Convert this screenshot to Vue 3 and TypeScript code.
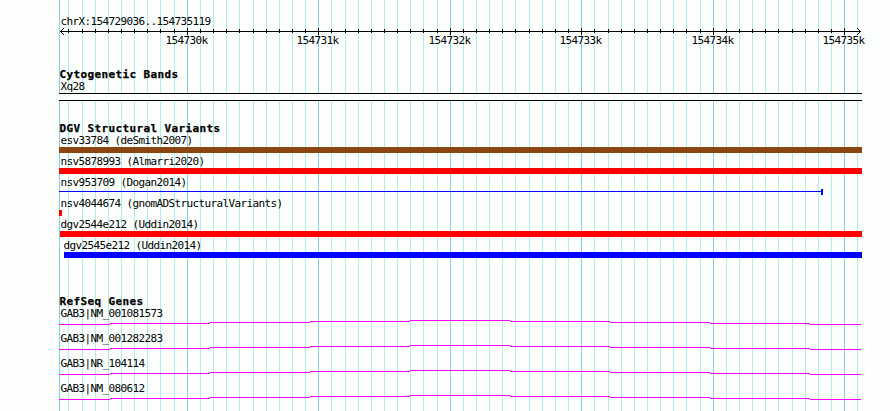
<script setup lang="ts">
interface Variant {
  name: string
  kind: 'bar' | 'range'
  color: string
  start: number
  end: number
  indent: number
}

const regionStart = 154729036
const regionEnd = 154735119
const panelWidth = 803
const scale = 800 / (regionEnd - regionStart + 1)

const toX = (position: number): number => 1 + Math.round((position - regionStart) * scale)

const ticks = Array.from({ length: 61 }, (_, i) => {
  const position = 154729100 + i * 100
  return { position, x: toX(position), major: position % 1000 === 0 }
}).filter((tick) => tick.position < regionEnd)

const majorTicks = ticks.filter((tick) => tick.major)

const variants: Variant[] = [
  { name: 'esv33784 (deSmith2007)', kind: 'bar', color: '#8b4513', start: 0, end: 803, indent: 1 },
  { name: 'nsv5878993 (Almarri2020)', kind: 'bar', color: '#ff0000', start: 0, end: 803, indent: 1 },
  { name: 'nsv953709 (Dogan2014)', kind: 'range', color: '#0000ff', start: 0, end: 764, indent: 1 },
  { name: 'nsv4044674 (gnomADStructuralVariants)', kind: 'bar', color: '#ff0000', start: 0, end: 3, indent: 1 },
  { name: 'dgv2544e212 (Uddin2014)', kind: 'bar', color: '#ff0000', start: 1, end: 803, indent: 1 },
  { name: 'dgv2545e212 (Uddin2014)', kind: 'bar', color: '#0000ff', start: 5, end: 803, indent: 4 },
]

const genes = ['GAB3|NM_001081573', 'GAB3|NM_001282283', 'GAB3|NR_104114', 'GAB3|NM_080612']

const intronSteps = [
  { x: 0, width: 51, y: 4 },
  { x: 51, width: 100, y: 3 },
  { x: 151, width: 100, y: 2 },
  { x: 251, width: 100, y: 1 },
  { x: 351, width: 100, y: 0 },
  { x: 451, width: 100, y: 1 },
  { x: 551, width: 100, y: 2 },
  { x: 651, width: 100, y: 3 },
  { x: 751, width: 51, y: 4 },
]
</script>

<template>
  <main class="browser">
    <div class="panel">
      <svg class="grid" :width="panelWidth" height="411" shape-rendering="crispEdges" aria-hidden="true">
        <rect class="major" x="0" y="0" width="1" height="411" />
        <rect
          v-for="tick in ticks"
          :key="tick.position"
          :class="tick.major ? 'major' : 'minor'"
          :x="tick.x"
          y="0"
          width="1"
          height="411"
        />
      </svg>

      <div class="tracks">
        <header class="ruler">
          <div class="label">chrX:154729036..154735119</div>
          <svg class="axis" :width="panelWidth" height="20">
            <g shape-rendering="crispEdges">
              <rect x="1" y="3" width="801" height="1" />
              <rect
                v-for="tick in ticks.filter((t) => t.x < 797)"
                :key="tick.position"
                :x="tick.x"
                :y="tick.major ? 0 : 1"
                width="1"
                :height="tick.major ? 7 : 4"
              />
              <path d="M1 3h1v1H1zM2 2h1v1H2zM3 1h1v1H3zM4 0h1v1H4zM2 4h1v1H2zM3 5h1v1H3zM4 6h1v1H4z" />
              <path d="M801 3h1v1h-1zM800 2h1v1h-1zM799 1h1v1h-1zM798 0h1v1h-1zM800 4h1v1h-1zM799 5h1v1h-1zM798 6h1v1h-1z" />
            </g>
            <text v-for="tick in majorTicks" :key="tick.position" :x="tick.x - 21.5" y="16">{{ tick.position / 1000 }}k</text>
          </svg>
        </header>

        <section class="track cytobands">
          <h2>Cytogenetic Bands</h2>
          <div class="label">Xq28</div>
          <div class="band"></div>
        </section>

        <section class="track variants">
          <h2>DGV Structural Variants</h2>
          <div v-for="variant in variants" :key="variant.name" class="variant">
            <div class="label" :style="{ paddingLeft: variant.indent + 0.4 + 'px' }">{{ variant.name }}</div>
            <div
              :class="variant.kind"
              :style="{ marginLeft: variant.start + 'px', width: variant.end - variant.start + 'px', color: variant.color }"
            ></div>
          </div>
        </section>

        <section class="track genes">
          <h2>RefSeq Genes</h2>
          <div v-for="gene in genes" :key="gene" class="gene">
            <div class="label">{{ gene }}</div>
            <svg class="intron" :width="panelWidth" height="5" shape-rendering="crispEdges">
              <rect v-for="step in intronSteps" :key="step.x" :x="step.x" :y="step.y" :width="step.width" height="1" />
            </svg>
          </div>
        </section>
      </div>
    </div>
  </main>
</template>

<style>
body {
  background: #fcfffc;
}
</style>

<style scoped>
.browser {
  height: 411px;
  padding-left: 59px;
  overflow: hidden;
  background: #fcfffc;
  color: #000;
  font: 11px/13px "DejaVu Sans Mono", "Liberation Mono", monospace;
}
.panel {
  position: relative;
  width: 803px;
  height: 411px;
}
svg {
  display: block;
}
.grid {
  position: absolute;
  inset: 0;
}
.minor {
  fill: #afeeee;
}
.major {
  fill: #87ceeb;
}
.tracks {
  position: relative;
  display: flex;
  flex-direction: column;
  padding-top: 15px;
}
.label {
  height: 13px;
  padding-left: 1.4px;
  letter-spacing: -0.622px;
  white-space: pre;
}
.axis {
  overflow: visible;
  letter-spacing: -0.622px;
}
.track h2 {
  height: 12px;
  margin: 0;
  padding-left: 0.5px;
  font-size: 11px;
  line-height: 13px;
  font-weight: 700;
  letter-spacing: 0.378px;
  white-space: pre;
  -webkit-text-stroke: 0.25px #000;
}
.cytobands {
  padding-top: 20px;
}
.band {
  box-sizing: border-box;
  height: 8px;
  border: solid #000;
  border-width: 1px 0;
  background: #fcfffc;
}
.variants {
  padding-top: 21px;
}
.variant {
  height: 21px;
}
.bar {
  height: 6px;
  background: currentColor;
}
.range {
  box-sizing: border-box;
  height: 6px;
  border-right: 2px solid currentColor;
  background: linear-gradient(currentColor, currentColor) 0 2px / 100% 1px no-repeat;
}
.genes {
  padding-top: 35px;
}
.gene {
  height: 25px;
}
.intron {
  fill: #ff00ff;
}
</style>
